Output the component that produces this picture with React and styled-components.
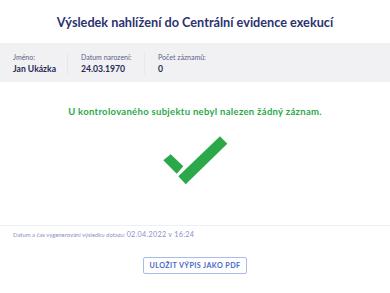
import styled, { createGlobalStyle } from "styled-components";

const GlobalStyle = createGlobalStyle`
  html, body {
    margin: 0;
    padding: 0;
    background: #ffffff;
    font-family: Lato, "Noto Sans", sans-serif;
  }
`;

const Page = styled.div`
  width: 390px;
  height: 293px;
  display: flex;
  flex-direction: column;
  overflow: hidden;
`;

const Title = styled.h1`
  margin: 0;
  padding: 14px 0 0;
  box-sizing: border-box;
  height: 43px;
  text-align: center;
  font-size: 12.7px;
  font-weight: 700;
  color: #2c3270;
`;

const InfoBand = styled.div`
  background-color: #f1f1f3;
  height: 39px;
  display: flex;
  align-items: center;
  padding: 2px 13px 0;
  box-sizing: border-box;
`;

const InfoCol = styled.div`
  width: ${(p) => p.$w}px;
  display: flex;
  flex-direction: column;
  gap: 3px;
  margin-right: 13px;
  border-right: ${(p) => (p.$last ? "none" : "1px solid #e6e7ee")};
`;

const Label = styled.span`
  font-size: 7px;
  color: #5a5f8a;
`;

const Value = styled.span`
  font-size: 8.6px;
  font-weight: 700;
  color: #262b55;
`;

const Message = styled.p`
  margin: 24px 0 0;
  text-align: center;
  font-size: 9.5px;
  font-weight: 700;
  color: #2ba84a;
  letter-spacing: 0.3px;
`;

const CheckWrap = styled.div`
  display: flex;
  justify-content: center;
  margin-top: 10px;
  height: 60px;
`;

const Divider = styled.hr`
  margin: 38px 0 0;
  border: none;
  border-top: 1px solid #eef0f7;
`;

const Stamp = styled.p`
  margin: 4px 13px 0;
  font-size: 5.9px;
  color: #8b90c2;

  b {
    font-weight: 400;
    font-size: 7.2px;
    letter-spacing: 0.3px;
  }
`;

const ButtonRow = styled.div`
  display: flex;
  justify-content: center;
  margin-top: 18px;
`;

const PdfButton = styled.button`
  border: 1px solid #a9bbe8;
  border-radius: 2px;
  background: #ffffff;
  color: #4a68c8;
  font-family: inherit;
  font-size: 7.2px;
  font-weight: 700;
  letter-spacing: 0.4px;
  padding: 0 6px;
  height: 17px;
  cursor: pointer;
`;

const CheckMark = () => (
  <svg width="65" height="60" viewBox="0 0 65 60">
    <polygon points="0.3,33.3 7.7,27.3 20.3,39.3 13.7,46.7" fill="#2ba84a" />
    <polygon points="15.3,49.3 57,9.3 64.3,16.7 22.7,57.3" fill="#2ba84a" />
  </svg>
);

export default function App() {
  return (
    <Page>
      <GlobalStyle />
      <Title>Výsledek nahlížení do Centrální evidence exekucí</Title>
      <InfoBand>
        <InfoCol $w={54}>
          <Label>Jméno:</Label>
          <Value>Jan Ukázka</Value>
        </InfoCol>
        <InfoCol $w={63}>
          <Label>Datum narození:</Label>
          <Value>24.03.1970</Value>
        </InfoCol>
        <InfoCol $w={80} $last>
          <Label>Počet záznamů:</Label>
          <Value>0</Value>
        </InfoCol>
      </InfoBand>
      <Message>U kontrolovaného subjektu nebyl nalezen žádný záznam.</Message>
      <CheckWrap>
        <CheckMark />
      </CheckWrap>
      <Divider />
      <Stamp>
        Datum a čas vygenerování výsledku dotazu: <b>02.04.2022 v 16:24</b>
      </Stamp>
      <ButtonRow>
        <PdfButton>ULOŽIT VÝPIS JAKO PDF</PdfButton>
      </ButtonRow>
    </Page>
  );
}
